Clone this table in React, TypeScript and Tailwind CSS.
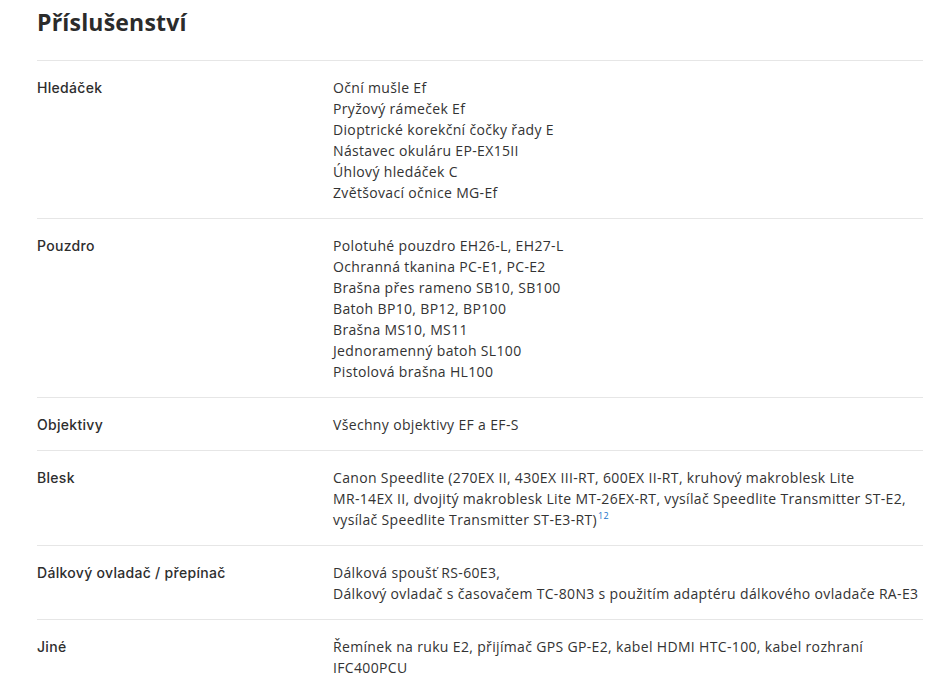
const rows: { label: string; items: React.ReactNode[] }[] = [
  {
    label: "Hledáček",
    items: [
      "Oční mušle Ef",
      "Pryžový rámeček Ef",
      "Dioptrické korekční čočky řady E",
      "Nástavec okuláru EP-EX15II",
      "Úhlový hledáček C",
      "Zvětšovací očnice MG-Ef",
    ],
  },
  {
    label: "Pouzdro",
    items: [
      "Polotuhé pouzdro EH26-L, EH27-L",
      "Ochranná tkanina PC-E1, PC-E2",
      "Brašna přes rameno SB10, SB100",
      "Batoh BP10, BP12, BP100",
      "Brašna MS10, MS11",
      "Jednoramenný batoh SL100",
      "Pistolová brašna HL100",
    ],
  },
  { label: "Objektivy", items: ["Všechny objektivy EF a EF-S"] },
  {
    label: "Blesk",
    items: [
      "Canon Speedlite (270EX II, 430EX III-RT, 600EX II-RT, kruhový makroblesk Lite",
      "MR-14EX II, dvojitý makroblesk Lite MT-26EX-RT, vysílač Speedlite Transmitter ST-E2,",
      <>
        vysílač Speedlite Transmitter ST-E3-RT)
        <span className="relative -top-[6px] ml-[1px] text-[9px] leading-none text-[#1a73c9]">12</span>
      </>,
    ],
  },
  {
    label: "Dálkový ovladač / přepínač",
    items: [
      "Dálková spoušť RS-60E3,",
      "Dálkový ovladač s časovačem TC-80N3 s použitím adaptéru dálkového ovladače RA-E3",
    ],
  },
  {
    label: "Jiné",
    items: [
      "Řemínek na ruku E2, přijímač GPS GP-E2, kabel HDMI HTC-100, kabel rozhraní IFC400PCU",
    ],
  },
];

export default function App() {
  return (
    <div className="min-h-screen bg-white pl-[37px] pr-[27px] text-[#333] font-['Open_Sans',sans-serif]">
      <h1 className="pt-[6px] pb-[22px] text-[23px] leading-[32px] font-bold tracking-[0.2px] text-[#2b2b2b]">
        Příslušenství
      </h1>
      <div>
        {rows.map((row) => (
          <div key={row.label} className="flex border-t border-[#e6e6e6] pt-4 pb-[15px]">
            <div className="w-[296px] shrink-0 font-['Inter',sans-serif] text-[14px] leading-[21px] font-medium tracking-[0.3px] text-[#2e2e2e]">
              {row.label}
            </div>
            <div className="flex-1 text-[14px] leading-[21px] tracking-[0.34px]">
              {row.items.map((it, i) => (
                <div key={i}>{it}</div>
              ))}
            </div>
          </div>
        ))}
      </div>
    </div>
  );
}
